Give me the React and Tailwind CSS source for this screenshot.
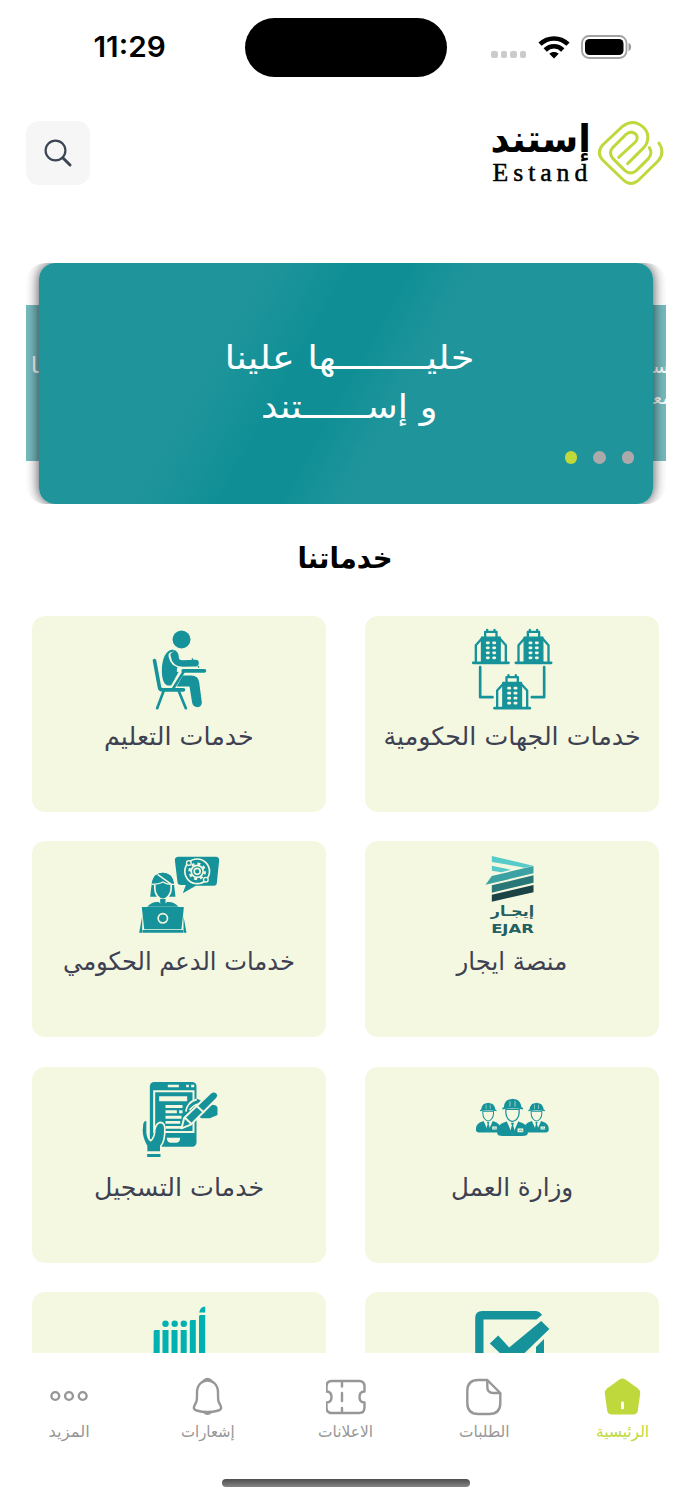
import React, { useLayoutEffect, useRef, useState } from 'react';

// Keeps a label at a fixed width whatever the installed font measures
const FitText = ({ width, className = '', children }) => {
    const ref = useRef(null);
    const [scale, setScale] = useState(1);

    useLayoutEffect(() => {
        setScale(width / ref.current.offsetWidth);
    }, [width]);

    return (
        <span className="flex justify-center whitespace-nowrap">
            <span ref={ref} className={`inline-block shrink-0 ${className}`} style={{ transform: `scaleX(${scale})` }}>
                {children}
            </span>
        </span>
    );
};

const StatusBar = () => (
    <div dir="ltr" className="flex h-[95px] shrink-0 items-center">
        <div className="w-[245px] pl-[15px] text-center font-['Inter'] text-[28.500px] font-semibold">
            <FitText width={72}>11:29</FitText>
        </div>
        <div className="h-[59px] w-[202px] rounded-full bg-black" />
        <div className="flex flex-1 items-center pl-[44px]">
            <div className="flex gap-[3px] pt-[14px]">
                {[0, 1, 2, 3].map((n) => (
                    <span key={n} className="h-[6.500px] w-[6.500px] rounded-[2px] bg-[#cbcbcb]" />
                ))}
            </div>
            <svg className="mb-[2px] ml-[12px] h-[24px] w-[32px]" viewBox="0 0 32 24" fill="none" stroke="#000" strokeWidth="4.600">
                <path d="M2 9.200C10 1.500 22 1.500 30 9.200" />
                <path d="M7.200 15c5-5 12.600-5 17.600 0" />
                <path d="M16 23.500l-4.700-4.800c2.600-2.300 6.800-2.300 9.400 0z" fill="#000" stroke="none" />
            </svg>
            <svg className="mb-[2px] ml-[11px] h-[24px] w-[52px]" viewBox="0 0 52 24">
                <rect x="1" y="1" width="44.500" height="22" rx="7" fill="none" stroke="#a2a2a2" strokeWidth="1.800" />
                <rect x="4" y="4" width="38.500" height="16" rx="4.500" />
                <path d="M47.500 8c3.500 1 3.500 7 0 8z" fill="#999" />
            </svg>
        </div>
    </div>
);

const Header = () => (
    <header className="mt-[26px] flex h-16 shrink-0 items-center justify-between pl-[26px] pr-[27px]">
        <div className="flex items-center gap-[6px]">
            <svg className="h-[66px] w-[68px]" viewBox="355 30 200 198" fill="none" stroke="#bfd93d" strokeWidth="9" strokeLinecap="round">
                <path d="M539 99q19 29-3 54l-58 57q-23 21-46 0l-62-60q-20-22 0-45l61-57q26-19 51-4 31 18 21 53-3 10-12 18l-46 46" />
                <path d="M510 113q11 17-3 33l-36 36q-17 14-34 0l-36-36q-15-17 0-34l39-39q17-13 30 0 8 12-2 23l-50 46" />
            </svg>
            <div dir="ltr" className="flex h-[66px] w-[100px] flex-col items-center">
                <FitText width={100} className="font-['DejaVu_Sans'] text-[38px] font-bold leading-[38px]">إستند</FitText>
                <FitText width={100} className="-mr-[3px] mt-[4px] font-['Liberation_Serif'] text-[26px] leading-[22px] tracking-[5px] [-webkit-text-stroke:0.5px_black]">
                    Estand
                </FitText>
            </div>
        </div>
        <button className="flex h-16 w-16 items-center justify-center rounded-[13px] bg-[#f6f6f6]">
            <svg className="h-7 w-7" viewBox="0 0 28 28" fill="none" stroke="#3b4554" strokeWidth="2.200" strokeLinecap="round">
                <circle cx="11.500" cy="11.500" r="9.900" />
                <path d="M19 19l7 7" strokeWidth="2.900" />
            </svg>
        </button>
    </header>
);

const Banner = () => (
    <section dir="ltr" className="mx-[26px] mt-[77.500px] flex h-[241.500px] shrink-0 items-center overflow-hidden rounded-[20px] font-['DejaVu_Sans'] text-white">
        <div className="h-[156px] w-[13px] overflow-hidden bg-[#76bbbf] pl-[5px] pt-[44px] text-[22px]">ـا</div>
        <div className="z-10 flex h-full w-[614px] flex-col items-center rounded-[16px] bg-[linear-gradient(119deg,#1f959b_30%,#0f8f95_42%,#0f8f95_50%,#1f959b_59%)] pt-[70px] shadow-[0_0_13px_rgba(0,0,0,0.75)]">
            <div className="pl-[6px]">
                <FitText width={250} className="text-[33px] leading-[49px]">خليــــــــها علينا</FitText>
                <FitText width={177} className="text-[33px] leading-[49px]">و إســــــتند</FitText>
            </div>
            <div className="mr-[19px] mt-[20.500px] flex gap-4 self-end">
                <span className="h-[12.500px] w-[12.500px] rounded-full bg-[#bfd93d]" />
                <span className="h-[12.500px] w-[12.500px] rounded-full bg-[#aca9aa]" />
                <span className="h-[12.500px] w-[12.500px] rounded-full bg-[#aca9aa]" />
            </div>
        </div>
        <div className="h-[156px] w-[13px] overflow-hidden bg-[#76bbbf] pt-[46px] text-[19px] leading-[31px]">
            <div>س&zwj;</div>
            <div>مع&zwj;</div>
        </div>
    </section>
);

const Building = ({ x, y }) => (
    <g transform={`translate(${x} ${y})`} stroke="#16939a" fill="none" strokeLinejoin="round" strokeLinecap="round">
        <path d="M3 102h106" strokeWidth="8" />
        <path d="M11 100V49l20-22M101 100V49L81 27" strokeWidth="7" />
        <path d="M28 99V25h56v74z" fill="#16939a" strokeWidth="4" />
        <path d="M39 24V9h34v15M45 8V3M67 8V3" strokeWidth="7" />
        {[42, 57, 72, 87].map((row) => (
            <path key={row} d={`M45 ${row}h4M64 ${row}h4`} stroke="#f5f8e1" strokeWidth="8" />
        ))}
    </g>
);

const GovernmentIcon = () => (
    <svg className="h-[100px] w-[100px]" viewBox="7.500 -10.500 300 300">
        <Building x={38} y={28} />
        <Building x={166} y={28} />
        <Building x={102} y={164} />
        <path d="M62 143v90h37M254 143v90h-37" fill="none" stroke="#16939a" strokeWidth="8" strokeLinecap="round" strokeLinejoin="round" />
    </svg>
);

const EducationIcon = () => (
    <svg className="h-[100px] w-[100px]" viewBox="-1.500 -10.500 300 300" fill="#16939a">
        <circle cx="156" cy="60" r="27" />
        <path d="M131 90c-22 0-34 29-34 63 0 26 7 45 19 45h18l30-38-22-3z" />
        <path d="M136 107q3 22 25 24l36-1" fill="none" stroke="#f5f8e1" strokeWidth="31" strokeLinecap="round" />
        <path d="M121 93q28-7 28 28l-8 34-30-15z" />
        <path d="M129 109q4 23 27 23l42-1" fill="none" stroke="#f5f8e1" strokeWidth="24" strokeLinecap="round" />
        <path d="M133 107q4 25 27 25l38-1" fill="none" stroke="#16939a" strokeWidth="20" strokeLinecap="round" />
        <path d="M142 168h44q20 0 23 20l8 60q0 13-13 15-13 0-16-13l-8-49h-48z" />
        <path d="M158 155l-29 52" stroke="#f5f8e1" strokeWidth="16" />
        <path d="M75 123l15 81q1 7 10 7h62M161 154h64" fill="none" stroke="#16939a" strokeWidth="11" strokeLinecap="round" />
        <path d="M164 154l-33 53M103 213l-20 53M147 213l22 53" fill="none" stroke="#16939a" strokeWidth="8" strokeLinecap="round" />
        <path d="M187 117l4 4M205 140l4 4" stroke="#16939a" strokeWidth="4" />
    </svg>
);

const EjarIcon = () => (
    <svg className="h-[100px] w-[100px]" viewBox="7.500 -9 300 300">
        <path d="M97 36l124 29-25 6-99-17z" fill="#56cbc9" />
        <path d="M97 65l57 12-28 8-29-5z" fill="#58c9c9" />
        <path d="M78 122l19-26 125-30v22z" fill="#3ba1a3" />
        <path d="M97 124l125-30v22L97 146z" fill="#2a7777" />
        <path d="M97 152l125-29v22L97 173z" fill="#1b4245" />
        <text x="159" y="217" textAnchor="middle" textLength="130" lengthAdjust="spacingAndGlyphs" fill="#245f62" className="font-['DejaVu_Sans'] text-[42px] font-bold">إيجـار</text>
        <text x="159" y="266" textAnchor="middle" textLength="128" lengthAdjust="spacingAndGlyphs" fill="#245f62" className="font-['DejaVu_Sans'] text-[39px] font-bold">EJAR</text>
    </svg>
);

const SupportIcon = () => (
    <svg className="h-[100px] w-[100px]" viewBox="-1.500 -9 300 300" fill="#16939a">
        <path d="M147 38h112q10 0 10 11l-7 68q-1 8-9 8h-54l-39 23 9-25h-15q-9 0-10-8l-8-66q0-11 11-11z" />
        <g fill="none" stroke="#f5f8e1">
            <circle cx="203" cy="82" r="37" strokeWidth="5" />
            <circle cx="203" cy="82" r="23" strokeWidth="7" strokeDasharray="9 9.060" />
            <circle cx="203" cy="82" r="18" strokeWidth="5" />
            <circle cx="203" cy="82" r="9" strokeWidth="5" />
        </g>
        <g stroke="#f5f8e1" strokeWidth="4">
            <circle cx="178" cy="57" r="7" />
            <circle cx="229" cy="107" r="7" />
        </g>
        <path d="M62 158l5-42c5-40 61-40 66 0l5 42z" />
        <path d="M76 122v12c0 17 12 32 24 32s25-15 25-32v-12" stroke="#f5f8e1" strokeWidth="5" />
        <path d="M67 119q22 1 33-4 14 7 33 4-5-33-33-33-28 0-33 33z" />
        <path d="M66 121q22 0 34-7 14 9 34 7M84 91l42 30" fill="none" stroke="#f5f8e1" strokeWidth="4" />
        <path d="M53 188q14-16 34-14 13 12 26 0 21-2 34 14zM92 165h16v12q-8 6-16 0zM38 217v49h-9zM162 217l9 49h-9z" />
        <path d="M39 191h122l-7 63H46z" stroke="#16939a" strokeWidth="4" strokeLinejoin="round" />
        <path d="M39 258h122v8H39z" />
        <circle cx="100" cy="223" r="14" fill="none" stroke="#f5f8e1" strokeWidth="5" />
    </svg>
);

const Worker = ({ x, y, scale }) => (
    <g transform={`translate(${x} ${y}) scale(${scale})`} fill="#16939a">
        <path d="M-48 111q-3-24 15-33l20-8h26l20 8q18 9 15 33-2 7-17 7h-62q-15 0-17-7z" />
        <path d="M-19 70L0 113l19-43-11-9H-8z" fill="#f5f8e1" />
        <path d="M-5 76H5L2 84l5 19-7 11-7-11 5-19z" />
        <path d="M-21 34v10c0 15 11 28 21 28s21-13 21-28V34z" fill="#f5f8e1" stroke="#16939a" strokeWidth="4" />
        <path d="M-32 34v-5l5-2C-26 10-16 2-6 2q6-4 12 0c10 0 21 8 22 25l5 2v5q-32-8-65 0z" />
        <path d="M-8 8v17M8 8v17" stroke="#f5f8e1" strokeWidth="2" />
        <path d="M16 94h18v12H16z" fill="#f5f8e1" />
        <path d="M20 101h4l2-3 3 4h3" fill="none" stroke="#16939a" strokeWidth="2" />
    </g>
);

const LaborIcon = () => (
    <svg className="h-[100px] w-[100px]" viewBox="7.500 -24 300 300">
        <Worker x={86} y={83} scale={0.76} />
        <Worker x={231} y={83} scale={0.76} />
        <Worker x={159} y={71} scale={0.95} />
    </svg>
);

const RegisterIcon = () => (
    <svg className="h-[100px] w-[100px]" viewBox="-1.500 -9 300 300" fill="#16939a">
        <rect x="61" y="36" width="140" height="194" rx="13" />
        <path d="M74 64h118v122H74z" fill="none" stroke="#f5f8e1" strokeWidth="6" />
        <path d="M115 44h33v8h-33zM170 44h8v8h-8zM185 44h9v8h-9zM89 79h84v15H89zM108 105h51v9h-51zM108 121h34v9h-34zM149 121h10v9h-10zM108 137h48v9h-48zM108 153h44v8h-44zM108 168h48v8h-48zM112 203h40q0 15-13 15h-14q-13 0-13-15z" fill="#f5f8e1" />
        <path d="M51 246v-18q-14-24-14-47l2-21q3-11 14-10v38q2 18 10 24 12-7 13-32 3-20 16-23 13 1 14 17 1 39-12 54v18z" stroke="#f5f8e1" strokeWidth="5" />
        <path d="M53 252h40v9H53z" />
        <path d="M169 124q3-29 35-38l23 14 25 5q12 1 12 10v20l-23 10h-25l-15-9-20 5z" fill="#16939a" />
        <path d="M169 125q3-28 33-37" fill="none" stroke="#f5f8e1" strokeWidth="5" />
        <path d="M156 175l8-31 79-76q12-8 20 1 7 9-2 18l-77 77z" stroke="#f5f8e1" strokeWidth="6" strokeLinejoin="round" />
        <path d="M167 144l19 18M202 108l22 20" stroke="#f5f8e1" strokeWidth="6" />
        <path d="M180 120q14-17 29-18" fill="none" stroke="#f5f8e1" strokeWidth="5" />
    </svg>
);

const ChecklistIcon = () => (
    <svg className="h-[100px] w-[100px]" viewBox="462.500 1292 100 100" fill="#16939a">
        <path d="M475.700 1360v-42q0-7 7-7H536q4 0 6.500 4l-5.500 4.500h-53v41z" />
        <path d="M490.300 1343.500l8.400-8 11 12 32-26.500 8.200 8-32 31-8 2z" />
        <path d="M536.500 1360v-13l8-8v22z" />
    </svg>
);

const AbsherIcon = () => (
    <svg className="h-[100px] w-[100px]" viewBox="129.500 1292 100 100" fill="#00b1b2">
        <path d="M154.200 1331l1-1h5v40h-6.200zM163 1330h6v40h-6zM172 1330h6v40h-6zM181.200 1330h6v40h-6zM190.300 1321l1-1h5v50h-6zM199.500 1316l1-1h5.200v55h-6.200zM199.700 1312.500q1-6 6-6v6z" />
        <circle cx="166" cy="1323.700" r="3.200" />
        <circle cx="175.200" cy="1323.700" r="3.200" />
        <circle cx="184.300" cy="1323.700" r="3.200" />
    </svg>
);

const services = [
    { title: 'خدمات الجهات الحكومية', width: 257, icon: GovernmentIcon },
    { title: 'خدمات التعليم', width: 150, icon: EducationIcon },
    { title: 'منصة ايجار', width: 111, icon: EjarIcon },
    { title: 'خدمات الدعم الحكومي', width: 232, icon: SupportIcon },
    { title: 'وزارة العمل', width: 122, icon: LaborIcon },
    { title: 'خدمات التسجيل', width: 170, icon: RegisterIcon },
    { icon: ChecklistIcon },
    { icon: AbsherIcon },
];

const Services = () => (
    <main className="flex min-h-0 flex-1 flex-col overflow-hidden pl-[32.400px] pr-[33.400px]">
        <h2 className="mt-[29px] h-[50px] text-center font-['DejaVu_Sans'] text-[29px] font-bold leading-[50px] text-black">
            <FitText width={95}>خدماتنا</FitText>
        </h2>
        <div className="mt-[33.200px] grid grid-cols-2 gap-x-[39px] gap-y-[29.300px]">
            {services.map(({ title, width, icon: Icon }, index) => (
                <div key={index} className="flex h-[196px] flex-col items-center rounded-[13px] bg-[#f5f8e1]">
                    <Icon />
                    {title && (
                        <FitText width={width} className="mt-px font-['DejaVu_Sans'] text-[25px] leading-[40px] text-[#3d4152]">{title}</FitText>
                    )}
                </div>
            ))}
        </div>
    </main>
);

const tabs = [
    {
        label: 'الرئيسية',
        width: 53,
        active: true,
        icon: (
            <>
                <path d="M17.500 3.500q3-1.800 6 0l12.500 9q2.500 2 2.200 5l-2.400 17q-.6 4-4.600 4H9.800q-4 0-4.600-4l-2.400-17q-.3-3 2.200-5z" transform="translate(0 -1)" fill="#bfd93d" stroke="none" />
                <path d="M20.500 26v5" stroke="#fff" strokeWidth="2.800" />
            </>
        ),
    },
    {
        label: 'الطلبات',
        width: 51,
        icon: <path d="M24 3H15Q4 3 4 14v12q0 11 11 11h11q11 0 11-11V16zM24 3v7q0 6 6 6h7" transform="translate(-.700 0)" />,
    },
    {
        label: 'الاعلانات',
        width: 55,
        icon: <path d="M7 4h27q5.500 0 5.500 5.500v5q-5 0-5 5.500t5 5.500v5q0 5.500-5.500 5.500H7q-5.500 0-5.500-5.500v-5q5 0 5-5.500t-5-5.500v-5Q1.500 4 7 4zM17 4.500v5M17 16v8M17 31v5" transform="translate(-1 0)" />,
    },
    {
        label: 'إشعارات',
        width: 54,
        icon: <path d="M10 16c0-16 21-16 21 0 0 8 0 9 2.500 13 1.500 3 0 4.500-2 5-7 2-15 2-22 0-2-.500-3.500-2-2-5C10 25 10 24 10 16zM17 4q3.500-3 7 0M16.500 35.500q4 3.500 8 0" transform="translate(0 -.500)" />,
    },
    {
        label: 'المزيد',
        width: 41,
        icon: (
            <>
                <circle cx="6.300" cy="19" r="3.900" />
                <circle cx="20" cy="19" r="3.900" />
                <circle cx="33.700" cy="19" r="3.900" />
            </>
        ),
    },
];

const TabBar = () => (
    <nav className="grid h-[125.500px] shrink-0 grid-cols-5 bg-white pt-[24px]">
        {tabs.map(({ label, width, icon, active }) => (
            <a key={label} className={active ? 'flex flex-col items-center text-[#bfd93d]' : 'flex flex-col items-center text-[#979797]'}>
                <svg className="h-10 w-[41px]" viewBox="0 0 41 40" fill="none" stroke="currentColor" strokeWidth="2.400" strokeLinecap="round" strokeLinejoin="round">
                    {icon}
                </svg>
                <FitText width={width} className="mt-[3px] font-['Noto_Sans','DejaVu_Sans'] text-[16px] leading-[22px]">{label}</FitText>
            </a>
        ))}
    </nav>
);

const App = () => (
    <div dir="rtl" className="flex h-[1500px] w-[692px] flex-col overflow-hidden bg-white text-black">
        <StatusBar />
        <Header />
        <Banner />
        <Services />
        <TabBar />
        <div className="flex h-[21.500px] shrink-0 justify-center">
            <div className="h-[8px] w-[248px] rounded-full bg-gradient-to-b from-[#4e4e4e] to-[#858585]" />
        </div>
    </div>
);

export default App;
